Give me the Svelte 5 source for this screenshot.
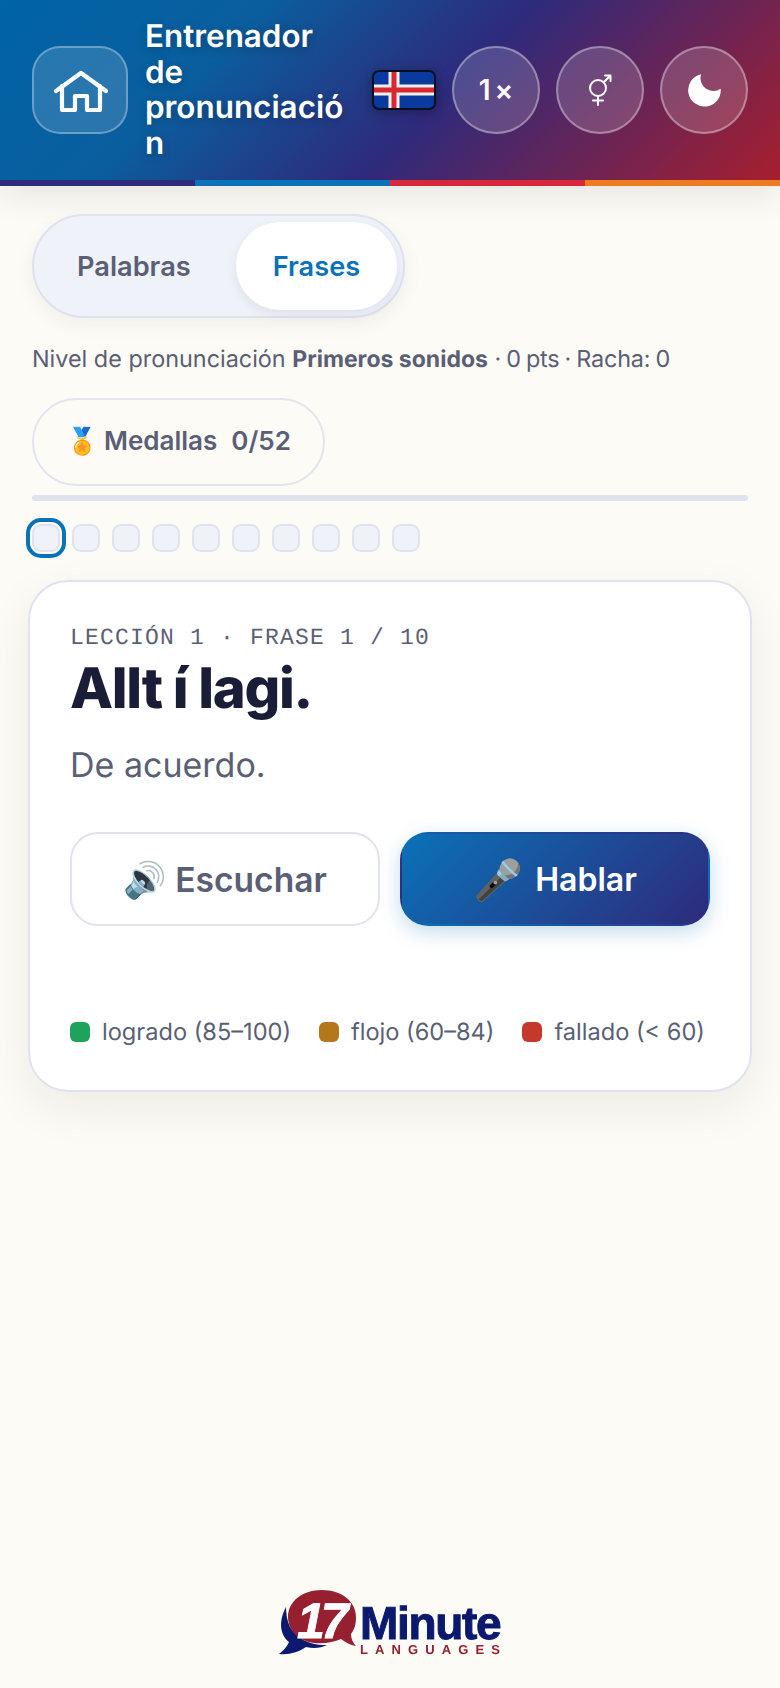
<script>
  const dots = Array.from({ length: 10 }, (_, i) => i);
  const legend = [
    { label: 'logrado (85–100)', color: '#1fa35b' },
    { label: 'flojo (60–84)', color: '#b4781c' },
    { label: 'fallado (< 60)', color: '#c4392b' }
  ];
</script>

<div class="page">
  <header class="top">
    <div class="bar">
      <button class="home" aria-label="Inicio">
        <svg viewBox="0 0 60 50" width="60" height="50" fill="none" stroke="#fff" stroke-width="4.200" stroke-linecap="round" stroke-linejoin="round">
          <path d="M6 26 31 8 56 26" />
          <path d="M12 21V45H25V31H37V45H50V21" />
        </svg>
      </button>
      <h1>Entrenador de pronunciación</h1>
      <svg class="flag" viewBox="0 0 64 40" width="64" height="40">
        <rect x="1" y="1" width="62" height="38" rx="6" fill="#0a3a9e" stroke="#0a0f1e" stroke-width="2" />
        <rect x="16.500" y="2" width="11" height="36" fill="#f1f1f1" />
        <rect x="2" y="14.500" width="60" height="11" fill="#f1f1f1" />
        <rect x="19.500" y="2" width="5" height="36" fill="#d9282f" />
        <rect x="2" y="17.500" width="60" height="5" fill="#d9282f" />
      </svg>
      <button class="round speed">1<span>×</span></button>
      <button class="round" aria-label="Voz">
        <svg viewBox="0 0 24 32" width="24" height="32" fill="none" stroke="#fff" stroke-width="2" stroke-linecap="round" stroke-linejoin="round">
          <circle cx="10" cy="14" r="8" />
          <path d="M10 22V31M5 26.500H15M16 8 22.500 1.500M17 1.500H22.500V7" />
        </svg>
      </button>
      <button class="round" aria-label="Tema">
        <svg class="moon" viewBox="0 0 32 32" width="33" height="33"><path fill="#fff" d="M12.700 .300A15.800 15.800 0 1 0 31.700 14.300 12.500 12.500 0 0 1 12.700 .300Z" /></svg>
      </button>
    </div>
    <div class="stripes"><i class="s1"></i><i class="s2"></i><i class="s3"></i><i class="s4"></i></div>
  </header>

  <main>
    <div class="toggle">
      <button class="tab">Palabras</button>
      <button class="tab active">Frases</button>
    </div>
    <p class="status">Nivel de pronunciación <b>Primeros sonidos</b> <span class="tail">· 0 pts · Racha: 0</span></p>
    <button class="medals"><span class="emoji">🏅</span> Medallas<span class="count">0/52</span></button>
    <div class="progress"></div>
    <div class="dots">
      {#each dots as d}
        <span class="dot" class:current={d === 0}></span>
      {/each}
    </div>

    <section class="card">
      <div class="eyebrow">LECCIÓN 1 · FRASE 1 / 10</div>
      <h2>Allt í lagi.</h2>
      <p class="trans">De acuerdo.</p>
      <div class="actions">
        <button class="act listen"><span class="ico">🔊</span>Escuchar</button>
        <button class="act speak"><span class="ico">🎤</span>Hablar</button>
      </div>
      <ul class="legend">
        {#each legend as l}
          <li><i style="background:{l.color}"></i>{l.label}</li>
        {/each}
      </ul>
    </section>
  </main>

  <footer>
    <svg class="logo" viewBox="0 0 222 68" width="222" height="68" role="img" aria-label="17 Minute Languages">
      <path fill="#0b1a6e" d="M7 19C0 32 0 46 10 54 8 59 4 63 0 66c10 1 20-2 27-7 8 2 15 1 21-2-16 1-30-6-37-18-3-6-4-14-4-20Z" />
      <path fill="#96202f" d="M43 2C24 2 9 13 9 29c0 14 11 24 26 26 11 1 20-1 27-4 4 3 9 6 15 7-3-3-5-7-5-12 4-5 5-11 5-17C77 13 62 2 43 2Z" />
      <text x="18" y="50" class="l17">17</text>
      <text x="81" y="51" class="lmin">Minute</text>
      <text x="81" y="66" class="llang">LANGUAGES</text>
    </svg>
  </footer>
</div>

<style>
  :global(body) {
    margin: 0;
    background: #fcfbf5;
  }
  .page {
    min-height: 1688px;
    display: flex;
    flex-direction: column;
    font-family: Inter, "Noto Sans", sans-serif;
    color: #5b5f76;
    box-sizing: border-box;
    text-rendering: geometricPrecision;
  }
  button {
    font-family: inherit;
    cursor: pointer;
    padding: 0;
  }
  .top {
    box-shadow: 0 8px 32px rgba(26, 26, 46, 0.1);
  }
  .bar {
    height: 180px;
    display: flex;
    align-items: center;
    gap: 16px;
    padding: 0 32px;
    box-sizing: border-box;
    background: linear-gradient(135deg, #0064a6 0%, #0a5e9e 28%, #2e2a7c 56%, #a81e2d 100%);
  }
  .home {
    flex: none;
    width: 96px;
    height: 88px;
    border-radius: 28px;
    border: 2px solid rgba(255, 255, 255, 0.3);
    background: rgba(255, 255, 255, 0.14);
    display: flex;
    align-items: center;
    justify-content: center;
  }
  h1 {
    flex: 1;
    min-width: 0;
    margin: 0 0 0 1px;
    color: #fff;
    font-size: 31.400px;
    line-height: 35.500px;
    font-weight: 600;
    overflow-wrap: anywhere;
    text-shadow: 0 2px 8px rgba(0, 0, 0, 0.25);
  }
  .flag {
    flex: none;
    filter: drop-shadow(0 2px 6px rgba(0, 0, 0, 0.3));
  }
  .round {
    flex: none;
    width: 88px;
    height: 88px;
    border-radius: 50%;
    border: 2px solid rgba(255, 255, 255, 0.35);
    background: rgba(255, 255, 255, 0.16);
    color: #fff;
    display: flex;
    align-items: center;
    justify-content: center;
  }
  .speed {
    font-size: 28px;
    font-weight: 600;
  }
  .speed span {
    font-size: 28px;
    margin-left: 4px;
  }
  .stripes {
    display: flex;
    height: 6px;
  }
  .stripes i {
    flex: 1;
  }
  .s1 { background: #2e2a7c; }
  .s2 { background: #0a72b8; }
  .s3 { background: #d9283a; }
  .s4 { background: #ee7d22; }

  main {
    padding: 28px 32px 0;
    display: flex;
    flex-direction: column;
    align-items: flex-start;
  }
  .toggle {
    display: flex;
    gap: 8px;
    padding: 6px;
    border: 2px solid #dfe2ee;
    border-radius: 999px;
    background: #eff2f9;
    box-shadow: 0 6px 20px rgba(26, 26, 46, 0.06);
  }
  .tab {
    height: 88px;
    padding: 0 37px;
    border: 0;
    border-radius: 999px;
    background: transparent;
    color: #5b5f76;
    font-size: 27.200px;
    font-weight: 600;
  }
  .tab.active {
    background: #fff;
    color: #0a72b8;
    box-shadow: 0 4px 12px rgba(26, 26, 46, 0.08);
  }
  .status {
    margin: 26px 0 0;
    font-size: 23.400px;
    line-height: 30px;
  }
  .status b {
    font-size: 23px;
    font-weight: 700;
  }
  .tail {
    word-spacing: -1.200px;
    letter-spacing: -0.200px;
  }
  .medals {
    margin-top: 24px;
    height: 88px;
    padding: 0 32px 4px;
    display: flex;
    align-items: center;
    border: 2px solid #e2e4ee;
    border-radius: 999px;
    background: transparent;
    color: #5b5f76;
    font-size: 26px;
    font-weight: 600;
  }
  .emoji {
    margin-right: 6px;
  }
  .count {
    margin-left: 14px;
  }
  .progress {
    align-self: stretch;
    margin-top: 9px;
    height: 6px;
    border-radius: 3px;
    background: #e0e2ef;
  }
  .dots {
    display: flex;
    gap: 12px;
    margin-top: 23px;
  }
  .dot {
    width: 28px;
    height: 28px;
    box-sizing: border-box;
    border: 2px solid #e0e3ee;
    border-radius: 9px;
    background: #eff2f9;
  }
  .dot.current {
    outline: 4px solid #0a72b8;
    outline-offset: 2px;
  }
  .card {
    align-self: stretch;
    margin: 28px -4px 0;
    padding: 42px 40px 43px;
    background: #fff;
    border: 2px solid #e0e2ef;
    border-radius: 40px;
    box-shadow: 0 16px 48px rgba(26, 26, 46, 0.07);
  }
  .eyebrow {
    font-family: "Liberation Mono", monospace;
    font-size: 23px;
    line-height: 28px;
    letter-spacing: 1.200px;
    color: #5b5f76;
  }
  h2 {
    margin: 2px 0 0;
    font-size: 56px;
    line-height: 68px;
    font-weight: 800;
    letter-spacing: -1.300px;
    color: #1a1d38;
  }
  .trans {
    margin: 22px 0 0;
    font-size: 34px;
    line-height: 44px;
  }
  .actions {
    display: grid;
    grid-template-columns: 1fr 1fr;
    gap: 20px;
    margin-top: 44px;
  }
  .act {
    height: 94px;
    border-radius: 28px;
    font-weight: 600;
    display: flex;
    align-items: center;
    justify-content: center;
  }
  .listen {
    background: #fff;
    border: 2px solid #e0e2ef;
    color: #5b5f76;
    font-size: 33.600px;
    gap: 8px;
  }
  .listen .ico {
    font-size: 35px;
  }
  .speak {
    border: 2px solid transparent;
    background: linear-gradient(135deg, #0a72b8, #2e2a7c);
    color: #fff;
    font-size: 32px;
    gap: 12px;
    box-shadow: 0 6px 20px rgba(10, 114, 184, 0.25);
  }
  .speak .ico {
    font-size: 40px;
  }
  .legend {
    list-style: none;
    display: flex;
    gap: 28px;
    margin: 91px 0 0;
    padding: 0;
    font-size: 23.600px;
    line-height: 30px;
    white-space: nowrap;
  }
  .legend li {
    display: flex;
    align-items: center;
    gap: 12px;
  }
  .legend i {
    width: 20px;
    height: 20px;
    border-radius: 6px;
  }
  footer {
    margin-top: auto;
    padding-bottom: 32px;
    display: flex;
    justify-content: center;
  }
  .logo {
    display: block;
    overflow: visible;
    filter: drop-shadow(0 0 3px #fff);
  }
  .l17 {
    font-family: "Liberation Sans", sans-serif;
    font-size: 50px;
    font-weight: 700;
    font-style: italic;
    letter-spacing: -4px;
    fill: #fff;
    stroke: #fff;
    stroke-width: 0.800;
  }
  .lmin {
    font-family: "Liberation Sans", sans-serif;
    font-size: 46px;
    font-weight: 700;
    letter-spacing: -1.300px;
    fill: #0b1a6e;
    stroke: #0b1a6e;
    stroke-width: 1;
  }
  .llang {
    font-family: "Liberation Sans", sans-serif;
    font-size: 13px;
    font-weight: 700;
    letter-spacing: 7.100px;
    fill: #96202f;
  }
</style>
